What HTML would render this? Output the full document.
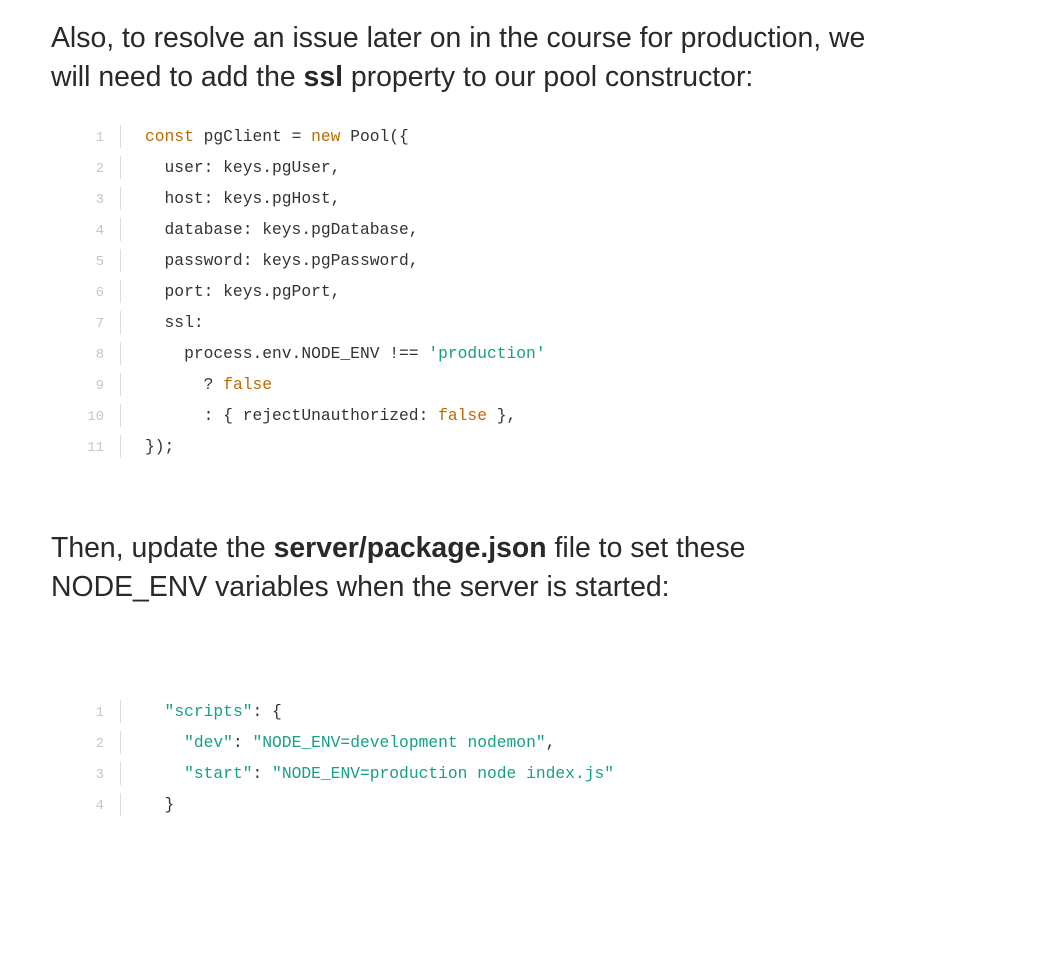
<!DOCTYPE html>
<html><head><meta charset="utf-8"><style>
body{margin:0;background:#fff;width:1039px;height:958px;overflow:hidden;font-family:"Liberation Sans",sans-serif;color:#292929}
p{position:absolute;left:51px;margin:0;font-size:28.4px;line-height:39px;white-space:nowrap}
.code{position:absolute;left:0;font-family:"Liberation Mono",monospace;font-size:16.3px}
.l{position:relative;height:31px;line-height:31px;white-space:pre}
.n{position:absolute;left:60px;top:2px;width:44px;text-align:right;color:#c4c8cc;font-size:14px}
.s{position:absolute;left:120px;top:4px;width:1px;height:23px;background:#dcdcdc}
.c{position:absolute;left:145px;color:#333}
.k{color:#c06a00}.g{color:#16a085}
</style></head><body>
<p style="top:19px">Also, to resolve an issue later on in the course for production, we<br>will need to add the <b>ssl</b> property to our pool constructor:</p>
<div class="code" style="top:121px">
<div class="l"><span class="n">1</span><span class="s"></span><span class="c"><span class="k">const</span> pgClient = <span class="k">new</span> Pool({</span></div>
<div class="l"><span class="n">2</span><span class="s"></span><span class="c">  user: keys.pgUser,</span></div>
<div class="l"><span class="n">3</span><span class="s"></span><span class="c">  host: keys.pgHost,</span></div>
<div class="l"><span class="n">4</span><span class="s"></span><span class="c">  database: keys.pgDatabase,</span></div>
<div class="l"><span class="n">5</span><span class="s"></span><span class="c">  password: keys.pgPassword,</span></div>
<div class="l"><span class="n">6</span><span class="s"></span><span class="c">  port: keys.pgPort,</span></div>
<div class="l"><span class="n">7</span><span class="s"></span><span class="c">  ssl:</span></div>
<div class="l"><span class="n">8</span><span class="s"></span><span class="c">    process.env.NODE_ENV !== <span class="g">'production'</span></span></div>
<div class="l"><span class="n">9</span><span class="s"></span><span class="c">      ? <span class="k">false</span></span></div>
<div class="l"><span class="n">10</span><span class="s"></span><span class="c">      : { rejectUnauthorized: <span class="k">false</span> },</span></div>
<div class="l"><span class="n">11</span><span class="s"></span><span class="c">});</span></div>
</div>
<p style="top:529px">Then, update the <b>server/package.json</b> file to set these<br>NODE_ENV variables when the server is started:</p>
<div class="code" style="top:696px">
<div class="l"><span class="n">1</span><span class="s"></span><span class="c">  <span class="g">"scripts"</span>: {</span></div>
<div class="l"><span class="n">2</span><span class="s"></span><span class="c">    <span class="g">"dev"</span>: <span class="g">"NODE_ENV=development nodemon"</span>,</span></div>
<div class="l"><span class="n">3</span><span class="s"></span><span class="c">    <span class="g">"start"</span>: <span class="g">"NODE_ENV=production node index.js"</span></span></div>
<div class="l"><span class="n">4</span><span class="s"></span><span class="c">  }</span></div>
</div>
</body></html>
